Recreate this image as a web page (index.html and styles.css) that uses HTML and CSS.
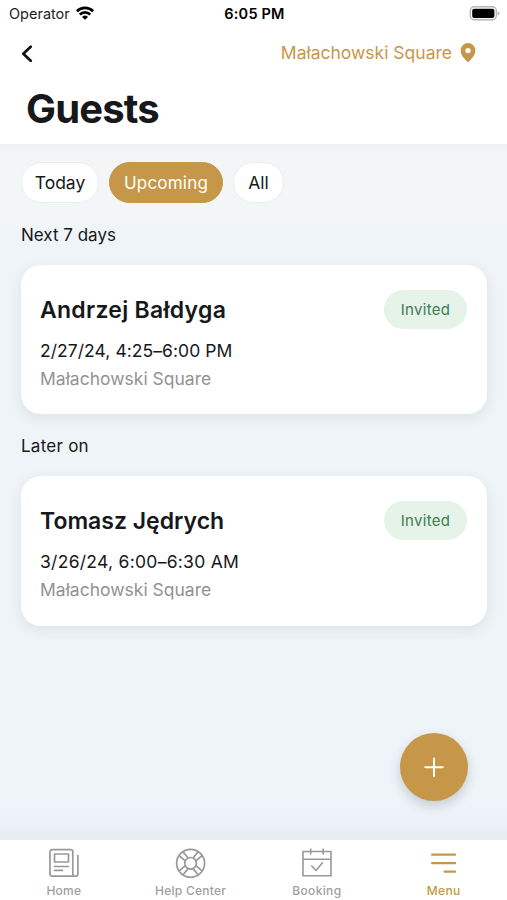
FILE: index.html
```html
<!DOCTYPE html>
<html lang="en">
<head>
<meta charset="utf-8">
<meta name="viewport" content="width=device-width, initial-scale=1">
<title>Guests</title>
<link rel="stylesheet" href="styles.css">
</head>
<body>
<div class="app">
  <header class="header">
    <div class="status">
      <div class="carrier"><span>Operator</span>
        <svg class="wifi" viewBox="0 0 18 14" width="18" height="14"><g fill="none" stroke="#000" stroke-width="2.700"><path d="M.9 5.200a11.500 11.500 0 0 1 16.200 0"/><path d="M3.800 8.500a7.400 7.400 0 0 1 10.400 0"/></g><path d="M9 13.800 6 10.900a4.300 4.300 0 0 1 6 0z"/></svg>
      </div>
      <div class="clock">6:05 PM</div>
      <svg class="battery" viewBox="0 0 31 15" width="31" height="15"><rect x="1.300" y=".8" width="26" height="13" rx="4" fill="#fff" stroke="#b5b5b5" stroke-width="1.400"/><rect x="3.200" y="2.700" width="22.200" height="9.200" rx="2"/><path d="M28.600 5.200q2 .8 2 2.200t-2 2.200z" fill="#b5b5b5"/></svg>
    </div>
    <div class="toolbar">
      <svg class="back" viewBox="0 0 12 18" width="12" height="18"><path d="M9.700 2.700 2.300 9.700l7.400 7" fill="none" stroke="#101114" stroke-width="2.700" stroke-linecap="round" stroke-linejoin="round"/></svg>
      <div class="location"><span>Małachowski Square</span>
        <svg viewBox="0 0 16 20" width="16" height="20"><path fill="#c69748" fill-rule="evenodd" d="M8 .1a7.400 7.400 0 0 0-7.400 7.400C.6 12.500 5 16.300 8 19.300c3-3 7.400-6.800 7.400-11.800A7.400 7.400 0 0 0 8 .1zM8 4.900a2.700 2.700 0 1 1 0 5.400 2.700 2.700 0 0 1 0-5.400z"/></svg>
      </div>
    </div>
    <h1>Guests</h1>
  </header>
  <main class="content">
    <div class="filters">
      <div class="pill today">Today</div><div class="pill active">Upcoming</div><div class="pill all">All</div>
    </div>
    <h2 class="next">Next 7 days</h2>
    <section class="card">
      <div class="card-top"><h3 class="andrzej">Andrzej Bałdyga</h3><span class="badge">Invited</span></div>
      <p class="time first-time">2/27/24, 4:25–6:00 PM</p>
      <p class="place">Małachowski Square</p>
    </section>
    <h2 class="later">Later on</h2>
    <section class="card">
      <div class="card-top"><h3 class="tomasz">Tomasz Jędrych</h3><span class="badge">Invited</span></div>
      <p class="time second-time">3/26/24, 6:00–6:30 AM</p>
      <p class="place">Małachowski Square</p>
    </section>
    <button class="fab" aria-label="Add guest"><svg viewBox="0 0 20 20" width="20" height="20"><path d="M10 1.500v17.400M1.300 10.200h17.400" stroke="#fff" stroke-width="2" stroke-linecap="round"/></svg></button>
  </main>
  <nav class="tabs">
    <div class="tab"><svg viewBox="-.7 0 32 32" width="32" height="32"><g fill="none" stroke="#999" stroke-width="1.700" stroke-linecap="round" stroke-linejoin="round"><path d="M27.700 29.200H4.300a2 2 0 0 1-2-2V4.700a2 2 0 0 1 2-2h18.800a2 2 0 0 1 2 2v22a2.550 2.550 0 0 0 5.100 0V8.500"/><path d="M6.800 7h14v8h-14zM6.800 19.500h14M6.800 23.300h8"/></g></svg><span class="home">Home</span></div>
    <div class="tab"><svg viewBox="-.6 -.3 32 32" width="32" height="32"><g fill="none" stroke="#999" stroke-width="1.700"><circle cx="16" cy="16" r="14"/><circle cx="16" cy="16" r="5.800"/><path d="M13.600 10.700 8.200 4.300M10.700 13.600 4.300 8.200"/><path d="M18.400 10.700l5.400-6.400M21.300 13.600l6.400-5.400"/><path d="M13.600 21.300l-5.400 6.400M10.700 18.400l-6.400 5.400"/><path d="M18.400 21.300l5.400 6.400M21.300 18.400l6.400 5.400"/></g></svg><span class="help">Help Center</span></div>
    <div class="tab"><svg viewBox="0 0 32 32" width="32" height="32"><g fill="none" stroke="#999" stroke-width="1.600"><path d="M2 4.500h28v24.200H2zM2 12.200h28M9.700 1.500v6M22.200 1.500v6"/><path d="m10.800 19 4.200 4.500 6.500-7.700" stroke-linecap="round" stroke-linejoin="round"/></g></svg><span class="booking">Booking</span></div>
    <div class="tab selected"><svg viewBox=".4 0 32 32" width="32" height="32"><path d="M4.500 7.700h23M4.500 16.200h23M17 24.700h10.500" fill="none" stroke="#c69748" stroke-width="2.200" stroke-linecap="round"/></svg><span class="menu">Menu</span></div>
  </nav>
</div>
</body>
</html>
```
FILE: styles.css
```css
* { box-sizing: border-box; }
body { margin: 0; font-family: Inter, "Liberation Sans", sans-serif; color: #16181b; background: #fff; }
h1, h2, h3, p { margin: 0; white-space: nowrap; }
svg { display: block; flex: none; }
.app { height: 900px; display: flex; flex-direction: column; overflow: hidden; }
.header { height: 144px; background: #fff; flex: none; }
.status { height: 28px; display: grid; grid-template-columns: 1fr auto 1fr; align-items: center; padding: 0 7px 0 9px; font-size: 14.500px; line-height: 20px; }
.carrier { display: flex; align-items: center; gap: 6px; color: #222; }
.wifi { margin-bottom: 2px; }
.clock { font-weight: 600; color: #000; letter-spacing: .2px; }
.battery { justify-self: end; margin-bottom: 2px; }
.toolbar { height: 50px; display: flex; align-items: center; justify-content: space-between; padding: 0 31px 0 21px; }
.location { display: flex; align-items: center; gap: 8px; color: #c69748; font-size: 17.500px; }
.location span { margin-top: -1px; }
h1 { padding-left: 26px; font-size: 40px; line-height: 62px; font-weight: 700; letter-spacing: -.85px; }
.content { position: relative; flex: 1; padding: 18px 20px 0 21px; background: linear-gradient(#eef0f1 0, #f3f5f6 8px, #f3f6f8 74px, #eef4f8 92px, #eef4f8 660px, #edf1fa 684px, #eaedef 688px, #eaedef 100%); }
.filters { display: flex; gap: 10px; height: 41px; }
.pill { display: flex; align-items: center; justify-content: center; height: 41px; border-radius: 21px; background: #fff; border: 1px solid #ebedef; font-size: 17.500px; }
.today { width: 78px; }
.all { width: 51px; }
.active { width: 114px; background: #c69748; border-color: #c69748; color: #fff; font-size: 17px; letter-spacing: .2px; }
h2 { font-size: 17px; line-height: 24px; font-weight: 400; }
.next { margin: 20px 0 17.500px; }
.later { margin: 20px 0 18px; letter-spacing: .25px; }
.card { height: 149.500px; border-radius: 20px; background: #fff; padding: 25px 20px 0 19px; box-shadow: 0 4px 14px rgba(40, 50, 60, .09); }
.card-top { display: flex; justify-content: space-between; align-items: center; height: 39px; }
h3 { font-size: 23px; font-weight: 600; line-height: 30px; padding-top: 1px; }
.andrzej { letter-spacing: .28px; }
.badge { width: 83px; height: 39px; border-radius: 20px; background: #e5f3e9; color: #3c7d53; font-size: 15px; line-height: 39px; text-align: center; letter-spacing: .3px; }
.time { margin-top: 8px; font-size: 17.500px; line-height: 28px; }
.first-time { letter-spacing: .05px; }
.second-time { letter-spacing: .28px; }
.place { font-size: 17.500px; line-height: 28px; color: #929292; }
.fab { position: absolute; left: 400px; top: 589px; width: 68px; height: 68px; padding: 0; border: 0; border-radius: 50%; background: #c69748; display: flex; align-items: center; justify-content: center; box-shadow: 0 5px 12px rgba(40, 50, 60, .2); }
.tabs { height: 60px; flex: none; background: #fff; display: grid; grid-template-columns: repeat(4, 1fr); }
.tab { display: flex; flex-direction: column; align-items: center; padding-top: 7px; color: #a0a0a0; font-size: 12px; line-height: 16px; font-weight: 500; letter-spacing: .25px; }
.tab span { margin-top: 4px; }
.home, .help { padding-left: 1px; }
.booking, .menu { letter-spacing: .35px; }
.selected { color: #c69748; }
```
